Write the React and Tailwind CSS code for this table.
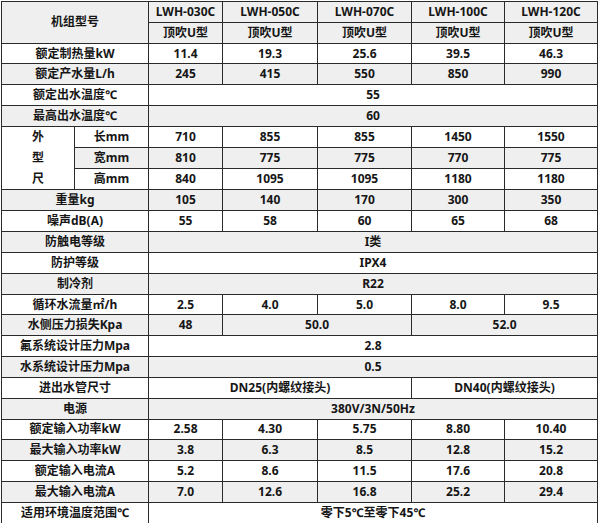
import React from "react";

const rows = [
  { label: "额定制热量kW", cells: [["11.4"], ["19.3"], ["25.6"], ["39.5"], ["46.3"]] },
  { label: "额定产水量L/h", cells: [["245"], ["415"], ["550"], ["850"], ["990"]] },
  { label: "额定出水温度℃", cells: [["55", 5]] },
  { label: "最高出水温度℃", cells: [["60", 5]] },
  { sub: "长mm", cells: [["710"], ["855"], ["855"], ["1450"], ["1550"]] },
  { sub: "宽mm", cells: [["810"], ["775"], ["775"], ["770"], ["775"]] },
  { sub: "高mm", cells: [["840"], ["1095"], ["1095"], ["1180"], ["1180"]] },
  { label: "重量kg", cells: [["105"], ["140"], ["170"], ["300"], ["350"]] },
  { label: "噪声dB(A)", cells: [["55"], ["58"], ["60"], ["65"], ["68"]] },
  { label: "防触电等级", cells: [["I类", 5]] },
  { label: "防护等级", cells: [["IPX4", 5]] },
  { label: "制冷剂", cells: [["R22", 5]] },
  { label: "循环水流量㎡/h", cells: [["2.5"], ["4.0"], ["5.0"], ["8.0"], ["9.5"]] },
  { label: "水侧压力损失Kpa", cells: [["48"], ["50.0", 2], ["52.0", 2]] },
  { label: "氟系统设计压力Mpa", cells: [["2.8", 5]] },
  { label: "水系统设计压力Mpa", cells: [["0.5", 5]] },
  { label: "进出水管尺寸", cells: [["DN25(内螺纹接头)", 3], ["DN40(内螺纹接头)", 2]] },
  { label: "电源", cells: [["380V/3N/50Hz", 5]] },
  { label: "额定输入功率kW", cells: [["2.58"], ["4.30"], ["5.75"], ["8.80"], ["10.40"]] },
  { label: "最大输入功率kW", cells: [["3.8"], ["6.3"], ["8.5"], ["12.8"], ["15.2"]] },
  { label: "额定输入电流A", cells: [["5.2"], ["8.6"], ["11.5"], ["17.6"], ["20.8"]] },
  { label: "最大输入电流A", cells: [["7.0"], ["12.6"], ["16.8"], ["25.2"], ["29.4"]] },
  { label: "适用环境温度范围℃", cells: [["零下5℃至零下45℃", 5]] },
];

const models = ["LWH-030C", "LWH-050C", "LWH-070C", "LWH-100C", "LWH-120C"];
const td = "border border-[#2a2a2a] p-0 text-center align-middle whitespace-nowrap";

export default function App() {
  return (
    <div className="w-[600px] h-[523px] bg-white p-px">
      <table
        className="table-fixed border-collapse w-[596px] text-[12px] font-bold leading-none text-[#161616]"
        style={{ fontFamily: '"Noto Sans", "Noto Sans CJK SC", sans-serif' }}
      >
        <colgroup>
          <col className="w-[73px]" />
          <col className="w-[74px]" />
          <col className="w-[74px]" />
          <col className="w-[95px]" />
          <col className="w-[94px]" />
          <col className="w-[93px]" />
          <col className="w-[93px]" />
        </colgroup>
        <tbody>
          <tr className="h-[20.84px] bg-[#efefef]">
            <td className={td} colSpan={2} rowSpan={2}>机组型号</td>
            {models.map((m) => (
              <td key={m} className={td}>{m}</td>
            ))}
          </tr>
          <tr className="h-[20.84px] bg-[#efefef]">
            {models.map((m) => (
              <td key={m} className={td}>顶吹U型</td>
            ))}
          </tr>
          {rows.map((r, i) => (
            <tr key={i} className={`h-[20.84px] ${i % 2 === 1 ? "bg-[#efefef]" : "bg-white"}`}>
              {r.sub === "长mm" && (
                <td className={`${td} bg-white`} rowSpan={3}>
                  <div className="flex flex-col items-center">
                    <span className="h-[20.84px] flex items-center">外</span>
                    <span className="h-[20.84px] flex items-center">型</span>
                    <span className="h-[20.84px] flex items-center">尺</span>
                  </div>
                </td>
              )}
              {r.sub ? (
                <td className={td}>{r.sub}</td>
              ) : (
                <td className={td} colSpan={2}>{r.label}</td>
              )}
              {r.cells.map(([v, span], j) => (
                <td key={j} className={td} colSpan={span || 1}>{v}</td>
              ))}
            </tr>
          ))}
        </tbody>
      </table>
    </div>
  );
}
